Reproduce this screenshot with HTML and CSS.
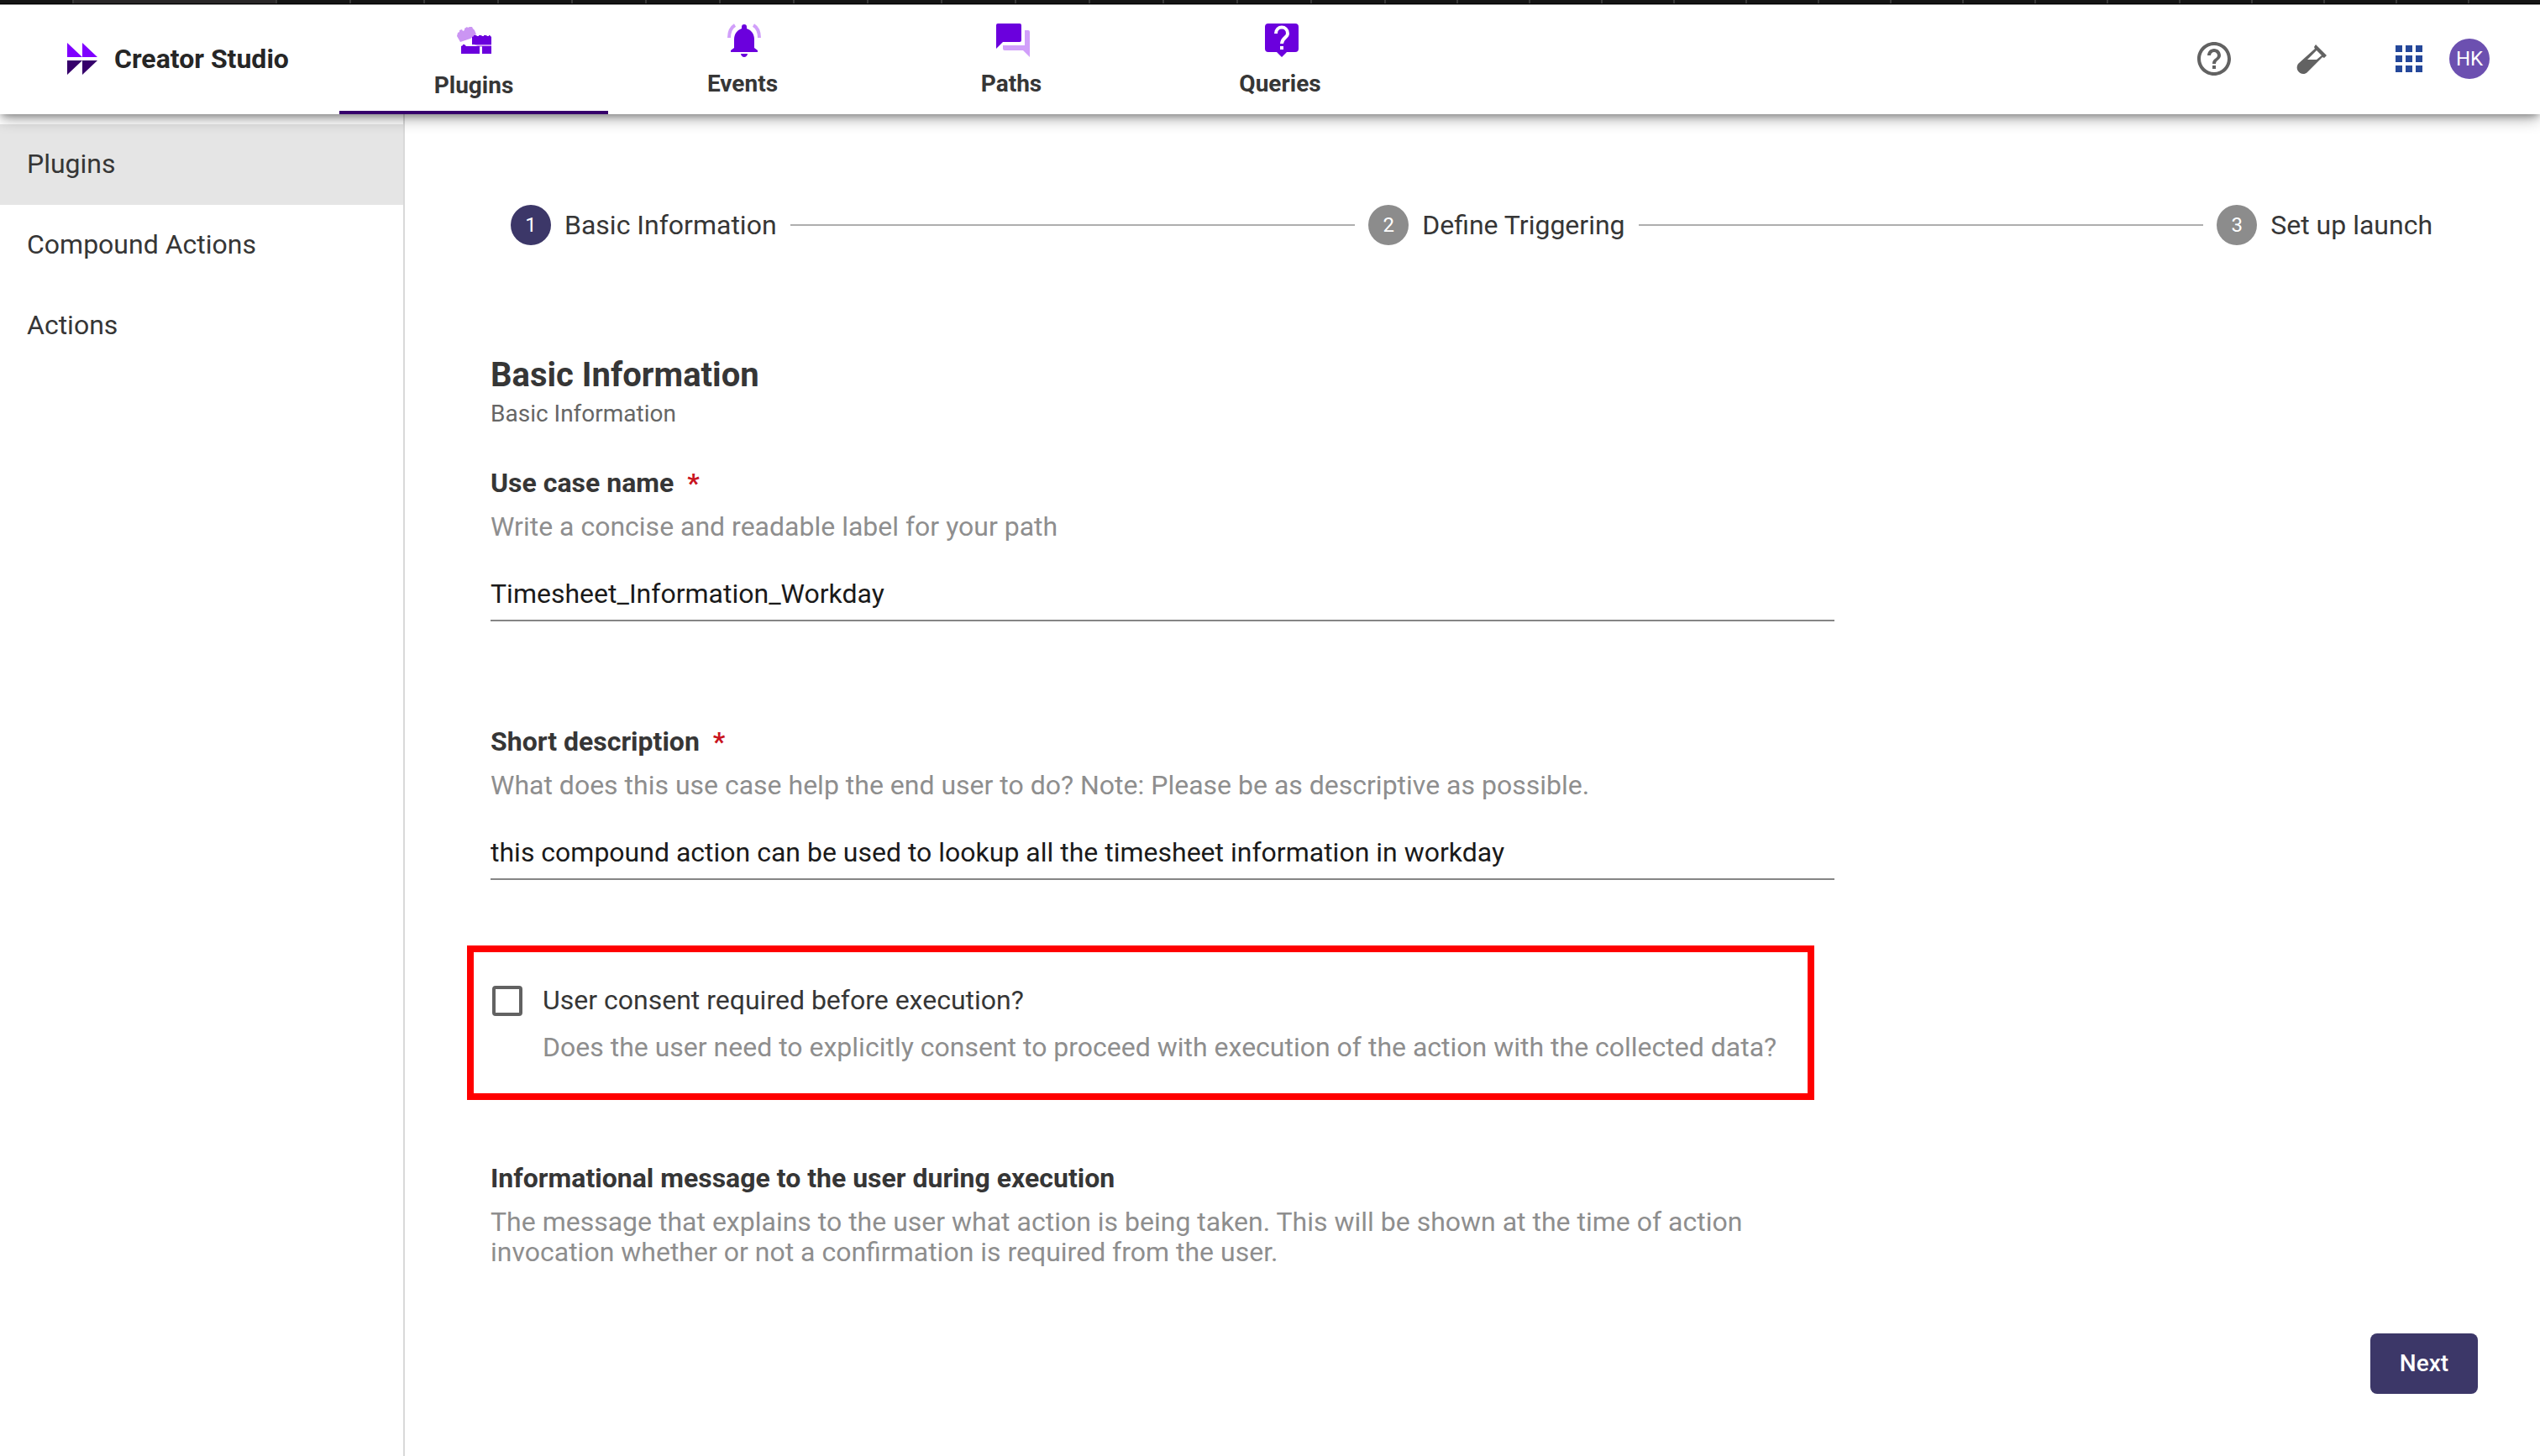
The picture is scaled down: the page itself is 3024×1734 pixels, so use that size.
FILE: index.html
```html
<!DOCTYPE html>
<html lang="en">
<head>
<meta charset="utf-8">
<title>Creator Studio</title>
<link rel="stylesheet" href="styles.css">
</head>
<body>
<div class="tabstrip" aria-hidden="true"><span class="tabstrip-first"></span><span class="tabstrip-active"></span><span class="tabstrip-wide"></span><span class="tabstrip-narrow"></span></div>
<header class="topbar">
  <a class="brand" href="#">
    <svg class="brand-logo" viewBox="0 0 36 38" aria-hidden="true">
      <path fill="#7f00ff" d="M0 0l18 17H0zM18 0l18 17H18z"/>
      <path fill="#36006b" d="M0 21h18L0 38zM18 21h18L18 38z"/>
    </svg>
    <span>Creator Studio</span>
  </a>
  <nav class="tabs">
    <a class="tab tab-selected" href="#">
      <svg class="tab-icon" viewBox="0 0 48 48" aria-hidden="true">
        <path fill="#cb95f3" d="M8 26l-4-7 1-4 2-1v-2l3-1 1 2 2-1v-2l3-2 1 1 2-1h3l1 2 2 2 2 5-7 5zM22 28h23v4H31z"/>
        <path fill="#6b00dd" d="M22 29v-9l2-1v-1h3l1 1h2v-1h3l1 1h2v-1h3l1 1h2v-1h1l2 2v9zM9 40v-9l2-1v-1h2l2 2h16v9zM34 31h11v9H34z"/>
      </svg>
      <span>Plugins</span>
    </a>
    <a class="tab" href="#">
      <svg class="tab-icon" viewBox="0 0 48 48" aria-hidden="true">
        <path fill="#6b00dd" d="M24 5c2 0 3 1 3 3v2c6 2 9 7 9 13v10l4 3v2H8v-2l4-3V23c0-6 3-11 9-13V8c0-2 1-3 3-3zM20 40h8c0 2-2 4-4 4s-4-2-4-4z"/>
        <path fill="none" stroke="#d19ffa" stroke-width="4" d="M13 6C8 9 6 14 6 21M35 6c5 3 7 8 7 15"/>
      </svg>
      <span>Events</span>
    </a>
    <a class="tab" href="#">
      <svg class="tab-icon" viewBox="0 0 48 48" aria-hidden="true">
        <path fill="#6b00dd" d="M6 4h26q2 0 2 2v18q0 2-2 2H12l-8 8V6q0-2 2-2z"/>
        <path fill="#d19ffa" d="M38 12h4q2 0 2 2v30l-8-8H14q-2 0-2-2v-4h26z"/>
      </svg>
      <span>Paths</span>
    </a>
    <a class="tab" href="#">
      <svg class="tab-icon" viewBox="0 0 48 48" aria-hidden="true">
        <path fill="#6b00dd" d="M8 4h32q4 0 4 4v26q0 4-4 4h-10l-6 6-6-6H8q-4 0-4-4V8q0-4 4-4z"/>
        <path fill="none" stroke="#fff" stroke-width="4" d="M17 16c0-10 14-10 14 0 0 5-7 5-7 12"/>
        <path fill="#fff" d="M22 31h4v4h-4z"/>
      </svg>
      <span>Queries</span>
    </a>
  </nav>
  <div class="tools">
    <button class="tool" type="button" aria-label="Help">
      <svg viewBox="0 0 24 24" fill="#626262" aria-hidden="true"><path d="M11 18h2v-2h-2v2zm1-16C6.480 2 2 6.480 2 12s4.480 10 10 10 10-4.480 10-10S17.520 2 12 2zm0 18c-4.410 0-8-3.590-8-8s3.590-8 8-8 8 3.590 8 8-3.590 8-8 8zm0-14c-2.210 0-4 1.790-4 4h2c0-1.100.9-2 2-2s2 .9 2 2c0 2-3 1.750-3 5h2c0-2.250 3-2.500 3-5 0-2.210-1.790-4-4-4z"/></svg>
    </button>
    <button class="tool" type="button" aria-label="Test">
      <svg viewBox="0 0 48 48" aria-hidden="true">
        <path fill="#626262" fill-rule="evenodd" d="M29 7l13 13-3 3-2-1-18 18c-6 6-16-2-11-10L28 12l-1-2zM30 14L19 25h11l6-5z"/>
      </svg>
    </button>
    <button class="tool" type="button" aria-label="Apps">
      <svg viewBox="0 0 24 24" fill="#25489a" aria-hidden="true"><path d="M4 8h4V4H4v4zm6 12h4v-4h-4v4zm-6 0h4v-4H4v4zm0-6h4v-4H4v4zm6 0h4v-4h-4v4zm6-10v4h4V4h-4zm-6 4h4V4h-4v4zm6 6h4v-4h-4v4zm0 6h4v-4h-4v4z"/></svg>
    </button>
    <button class="avatar" type="button">HK</button>
  </div>
</header>
<div class="layout">
  <nav class="sidebar">
    <a class="side-link side-link-selected" href="#">Plugins</a>
    <a class="side-link" href="#">Compound Actions</a>
    <a class="side-link" href="#">Actions</a>
  </nav>
  <main class="content">
    <ol class="stepper">
      <li class="step"><span class="step-number step-number-active">1</span>Basic Information</li>
      <li class="step-line" aria-hidden="true"></li>
      <li class="step"><span class="step-number">2</span>Define Triggering</li>
      <li class="step-line" aria-hidden="true"></li>
      <li class="step"><span class="step-number">3</span>Set up launch</li>
    </ol>
    <form class="form">
      <h1 class="title">Basic Information</h1>
      <p class="subtitle">Basic Information</p>
      <div class="field">
        <label class="label" for="name">Use case name<span class="required">*</span></label>
        <p class="hint">Write a concise and readable label for your path</p>
        <input class="input" id="name" type="text" value="Timesheet_Information_Workday">
      </div>
      <div class="field">
        <label class="label" for="description">Short description<span class="required">*</span></label>
        <p class="hint">What does this use case help the end user to do? Note: Please be as descriptive as possible.</p>
        <input class="input" id="description" type="text" value="this compound action can be used to lookup all the timesheet information in workday">
      </div>
      <div class="consent">
        <input class="checkbox" id="consent" type="checkbox">
        <div class="consent-text">
          <label for="consent">User consent required before execution?</label>
          <p class="hint">Does the user need to explicitly consent to proceed with execution of the action with the collected data?</p>
        </div>
      </div>
      <div class="field">
        <p class="label">Informational message to the user during execution</p>
        <p class="hint">The message that explains to the user what action is being taken. This will be shown at the time of action invocation whether or not a confirmation is required from the user.</p>
      </div>
    </form>
    <div class="actions"><button class="next" type="button">Next</button></div>
  </main>
</div>
</body>
</html>
```
FILE: styles.css
```css
* { box-sizing: border-box; }
body {
  margin: 0;
  min-height: 100vh;
  display: flex;
  flex-direction: column;
  background: #fff;
  color: #363636;
  font: 32px/36px Roboto, "Liberation Sans", sans-serif;
}
a { color: inherit; text-decoration: none; }
button { font: inherit; border: 0; padding: 0; cursor: pointer; }
p, h1, ol { margin: 0; padding: 0; }

.tabstrip {
  display: flex;
  height: 5px;
  flex: none;
  background: #161616;
  border-bottom: 1px solid #000;
}
.tabstrip-first { width: 88px; border-right: 2px solid #3a3a3a; }
.tabstrip-active { width: 242px; background: #2a2829; border-right: 2px solid #3a3a3a; }
.tabstrip-wide { width: 1320px; background: repeating-linear-gradient(to right, #161616 0 86px, #3a3a3a 86px 88px); }
.tabstrip-narrow { flex: 1; background: repeating-linear-gradient(to right, #161616 0 84px, #3a3a3a 84px 86px); }

.topbar {
  position: relative;
  z-index: 1;
  display: flex;
  align-items: center;
  height: 131px;
  flex: none;
  padding: 0 60px 0 80px;
  border-top: 1px solid #999;
  background: #fff;
  box-shadow: 0 4px 8px -2px rgba(0,0,0,.3), 0 8px 16px -2px rgba(0,0,0,.3);
}
.brand {
  display: flex;
  align-items: center;
  gap: 20px;
  width: 324px;
  padding-bottom: 2px;
  color: #262626;
  font-weight: 700;
}
.brand-logo { width: 36px; height: 38px; }
.tabs { display: flex; align-self: stretch; }
.tab {
  display: flex;
  flex-direction: column;
  align-items: center;
  gap: 12px;
  width: 320px;
  padding-top: 18px;
  border-bottom: 4px solid transparent;
  font-size: 28px;
  line-height: 32px;
  font-weight: 700;
}
.tab-selected { gap: 14px; border-color: #36006b; }
.tab-icon { width: 48px; height: 48px; margin-left: 4px; }
.tab-selected .tab-icon { margin-left: 0; }
.tools { display: flex; align-items: center; margin-left: auto; padding-bottom: 2px; }
.tool { width: 48px; height: 48px; margin-right: 68px; background: none; }
.tool svg { display: block; width: 48px; height: 48px; }
.tool:nth-child(3) { margin-right: 24px; }
.avatar {
  width: 48px;
  height: 48px;
  border-radius: 50%;
  background: #6c50b0;
  color: #fff;
  font-size: 24px;
}

.layout { display: flex; flex: 1; }
.sidebar { width: 482px; flex: none; padding-top: 12px; border-right: 2px solid #d9d9d9; }
.side-link { display: block; padding: 29px 32px 31px; }
.side-link-selected { background: #e5e5e5; }

.content { flex: 1; padding: 108px 64px 74px 62px; }
.stepper { display: flex; align-items: center; gap: 16px; padding: 0 64px; list-style: none; }
.step { display: flex; align-items: center; gap: 16px; }
.step-line { flex: 1; height: 2px; background: #aeaeae; }
.step-number {
  display: flex;
  align-items: center;
  justify-content: center;
  width: 48px;
  height: 48px;
  border-radius: 50%;
  background: #8c8c8c;
  color: #fff;
  font-size: 24px;
}
.step-number-active { background: #3c3768; }

.form { width: 100%; max-width: 1680px; padding: 129px 40px 0; }
.title { font-size: 40px; line-height: 52px; font-weight: 700; }
.subtitle { font-size: 28px; line-height: 40px; color: #666; }
.field { padding-top: 44px; }
.field + .field { padding-top: 125px; }
.label { display: block; font-weight: 700; }
.required { margin-left: 16px; color: #c9141e; }
.hint { padding-top: 16px; color: #8e8e8e; }
.input {
  display: block;
  width: 100%;
  height: 64px;
  margin-top: 31px;
  padding: 0;
  border: 0;
  border-bottom: 2px solid #858585;
  background: none;
  color: #1a1a1a;
  font: inherit;
}
.consent {
  display: flex;
  gap: 24px;
  margin: 78px -16px 0 -28px;
  max-width: 1604px;
  padding: 39px 22px 37px;
  border: 8px solid #f00;
}
.checkbox {
  appearance: none;
  flex: none;
  width: 36px;
  height: 36px;
  margin: 1px 0 0;
  border: 4px solid #626262;
  border-radius: 4px;
}
.consent-text label { display: block; }
.consent-text .hint { padding-top: 20px; }
.consent + .field { padding-top: 75px; }
.actions { display: flex; justify-content: flex-end; padding: 79px 10px 0; }
.next {
  width: 128px;
  height: 72px;
  border-radius: 8px;
  background: #3c3768;
  color: #fff;
  font-size: 28px;
  font-weight: 500;
}
```
